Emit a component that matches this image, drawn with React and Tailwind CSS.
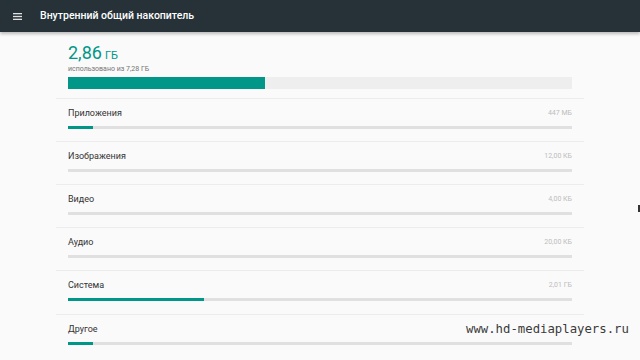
import React from 'react';

const categories = [
  { name: 'Приложения', size: '447 МБ', used: 25 },
  { name: 'Изображения', size: '12,00 КБ', used: 0 },
  { name: 'Видео', size: '4,00 КБ', used: 0 },
  { name: 'Аудио', size: '20,00 КБ', used: 0 },
  { name: 'Система', size: '2,01 ГБ', used: 136 },
  { name: 'Другое', size: '', used: 25 },
];

const Row = ({ item, tall }) => (
  <div className={`border-t border-[#ececec] px-3 pt-2 pb-3 ${tall ? 'h-[44px]' : 'h-[43px]'}`}>
    <div className="flex items-center justify-between h-3">
      <span className="text-[9px] leading-3 text-[#333]">{item.name}</span>
      <span className="text-[7px] leading-3 text-[#bdbdbd]">{item.size}</span>
    </div>
    <div className="mt-[7px] h-[3px] bg-[#e0e0e0]">
      <div className="h-full bg-[#009688]" style={{ width: item.used }} />
    </div>
  </div>
);

export default function App() {
  return (
    <div className="relative w-[640px] h-[360px] overflow-hidden bg-[#fafafa]" style={{ fontFamily: 'Roboto, "Noto Sans", sans-serif' }}>
      {/* шапка */}
      <header className="relative z-10 h-8 bg-[#263238] flex items-center shadow-[0_2px_3px_rgba(0,0,0,0.25)]">
        <svg width="9" height="7" viewBox="0 0 9 7" className="ml-[13px]">
          <rect x="0" y="0" width="9" height="1.3" fill="#e0e0e0" />
          <rect x="0" y="2.85" width="9" height="1.3" fill="#e0e0e0" />
          <rect x="0" y="5.7" width="9" height="1.3" fill="#e0e0e0" />
        </svg>
        <h1 className="ml-[18px] text-[10.5px] font-medium text-white">Внутренний общий накопитель</h1>
      </header>

      <main className="ml-[56px] w-[528px]">
        <div className="px-3 pt-[12px] pb-[9px]">
          <div className="flex items-baseline text-[#009688] h-[18px]">
            <span className="text-[18px] leading-[18px]">2,86</span>
            <span className="ml-[3px] text-[11px]">ГБ</span>
          </div>
          <p className="mt-[3px] text-[7px] leading-[8px] text-[#757575]">использовано из 7,28 ГБ</p>
          <div className="mt-1 h-3 bg-[#eeeeee]">
            <div className="h-full bg-[#009688] w-[197px]" />
          </div>
        </div>
        {categories.map((c, i) => (
          <Row key={c.name} item={c} tall={i === 4} />
        ))}
      </main>

      <div className="absolute right-0 top-[205px] w-[2px] h-[7px] bg-[#333]" />
      <div className="absolute left-[466px] top-[320px] text-[12.3px] text-[#3a3a3a]" style={{ fontFamily: '"DejaVu Sans Mono", monospace' }}>
        www.hd-mediaplayers.ru
      </div>
    </div>
  );
}
